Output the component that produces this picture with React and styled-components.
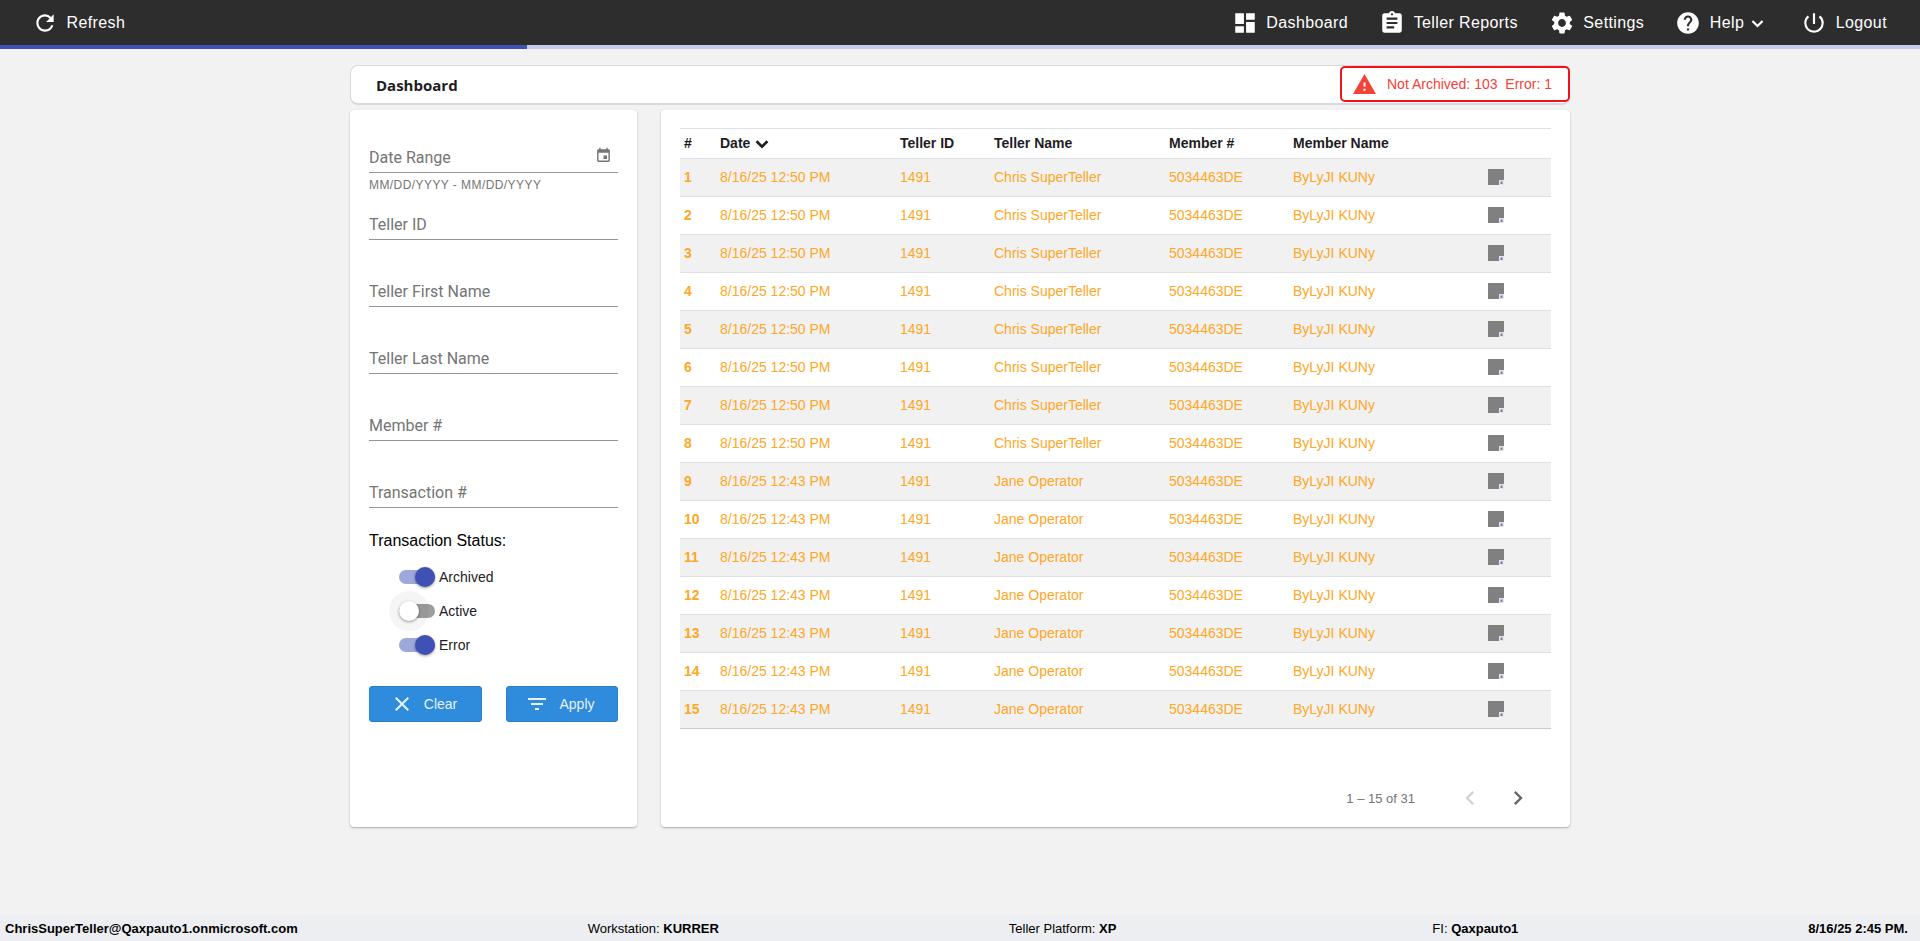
import React from "react";
import styled, { createGlobalStyle } from "styled-components";
import {
  MdRefresh, MdDashboard, MdAssignment, MdSettings, MdHelp, MdPowerSettingsNew,
  MdWarning, MdEvent, MdClose, MdFilterList, MdChevronLeft, MdChevronRight,
} from "react-icons/md";

const Global = createGlobalStyle`
  html, body { margin: 0; padding: 0; background: #f2f2f2; }
  * { box-sizing: border-box; }
  body { font-family: "Liberation Sans", Arial, sans-serif; }
`;

const Page = styled.div`
  height: 100vh;
  display: flex;
  flex-direction: column;
  overflow: hidden;
`;
const Nav = styled.header`
  height: 45px;
  flex: none;
  background: #2d2d2d;
  color: #fff;
  display: flex;
  align-items: center;
  justify-content: space-between;
  padding: 0 33px 0 32px;
`;
const NavGroup = styled.nav`
  display: flex;
  align-items: center;
  gap: 31px;
`;
const NavItem = styled.a`
  display: flex;
  align-items: center;
  gap: 8.5px;
  font-size: 16px;
  letter-spacing: 0.39px;
  color: #fff;
  white-space: nowrap;
  svg { font-size: 26px; flex: none; }
`;
const ChevronSvg = styled.svg`
  flex: none;
  fill: none;
  stroke: currentColor;
  stroke-width: 3;
`;
const NavChevron = styled(ChevronSvg)`
  width: 13px;
  height: 9px;
  margin: 2px 6px 0 -1.5px;
`;
const HeadChevron = styled(ChevronSvg)`
  width: 14px;
  height: 10px;
  margin: 2px 0 0 5px;
  stroke-width: 3.4;
`;
const ProgressTrack = styled.div`
  height: 4px;
  flex: none;
  background: #c5cae9;
`;
const ProgressFill = styled.div`
  height: 100%;
  background: #3f51b5;
`;
const Main = styled.main`
  flex: 1;
  width: 1220px;
  margin-left: 350px;
  padding-top: 16px;
  display: flex;
  flex-direction: column;
  gap: 5px;
`;
const TitleCard = styled.section`
  height: 40px;
  background: #fff;
  border: 1px solid #d9d9d9;
  border-bottom-width: 2px;
  border-radius: 8px;
  display: flex;
  align-items: flex-start;
  justify-content: space-between;
  padding-left: 25px;
`;
const Title = styled.h1`
  margin: 0;
  font: 700 15px/38px "Open Sans", sans-serif;
  color: #1d1d1f;
`;
const Alert = styled.div`
  width: 230px;
  height: 36px;
  margin-right: -1px;
  border: 2px solid #f4101c;
  border-radius: 5px;
  background: #fff;
  display: flex;
  align-items: center;
  gap: 10px;
  padding-left: 10px;
  color: #f44336;
  font-size: 14px;
  white-space: pre;
  svg { font-size: 25px; flex: none; }
`;
const Panels = styled.div`
  display: flex;
  gap: 24px;
`;
const Panel = styled.section`
  height: 717px;
  background: #fff;
  border-radius: 4px;
  box-shadow: 0 1px 2px rgba(0, 0, 0, 0.3);
`;
const FilterPanel = styled(Panel)`
  width: 287px;
  padding: 0 19px;
`;
const Field = styled.div`
  height: ${(p) => p.$h || 67}px;
  display: flex;
  flex-direction: column;
  justify-content: flex-end;
`;
const FieldRow = styled.div`
  height: 30px;
  border-bottom: 1px solid #949494;
  color: #757575;
  font-family: Roboto, sans-serif;
  font-size: 16px;
  display: flex;
  justify-content: space-between;
  align-items: center;
  padding-right: 6px;
  svg { font-size: 17px; margin-top: -4px; }
`;
const Hint = styled.div`
  height: 25px;
  line-height: 25px;
  font-size: 12px;
  letter-spacing: 0.43px;
  color: #757575;
`;
const StatusTitle = styled.div`
  margin-top: 23px;
  height: 20px;
  line-height: 20px;
  font-size: 16px;
  color: #000;
`;
const ToggleList = styled.div`
  margin: 9px 0 0 30px;
  display: flex;
  flex-direction: column;
`;
const ToggleRow = styled.label`
  height: 34px;
  display: flex;
  align-items: center;
  gap: 4px;
  font-size: 14px;
  color: #212121;
`;
const Track = styled.span`
  position: relative;
  width: 36px;
  height: 14px;
  border-radius: 7px;
  background: ${(p) => (p.$on ? "#9fa8da" : "#9e9e9e")};
`;
const Thumb = styled.span`
  position: absolute;
  top: -3px;
  left: ${(p) => (p.$on ? "16px" : "0")};
  width: 20px;
  height: 20px;
  border-radius: 50%;
  background: ${(p) => (p.$on ? "#3f51b5" : "#fff")};
  box-shadow: 0 1px 3px rgba(0, 0, 0, 0.4);
  ${(p) => (p.$focus ? "outline: 10px solid rgba(0,0,0,0.04);" : "")}
`;
const ButtonRow = styled.div`
  margin-top: 24px;
  display: flex;
  justify-content: space-between;
`;
const Button = styled.button`
  width: ${(p) => p.$w}px;
  height: 36px;
  border: 1px solid #2b80c9;
  border-radius: 3px;
  background: #2f8cdc;
  color: #e6f1fb;
  font: 14px "Liberation Sans", Arial, sans-serif;
  display: flex;
  align-items: center;
  justify-content: center;
  gap: 10px;
  padding: 0 4px 0 0;
  svg { font-size: 24px; }
`;
const TablePanel = styled(Panel)`
  width: 909px;
  padding: 18px 19px 0;
  display: flex;
  flex-direction: column;
`;
const columns = "36px 180px 94px 175px 124px 195px 1fr";
const HeadRow = styled.div`
  height: 31px;
  display: grid;
  grid-template-columns: ${columns};
  align-items: center;
  padding: 0 0 2px 4px;
  border-top: 1px solid #dfe0e6;
  border-bottom: 1px solid #dfe0e6;
  font-size: 14px;
  font-weight: 700;
  color: #1d1d1f;
`;
const DateHead = styled.span`
  display: flex;
  align-items: center;
`;
const Row = styled.div`
  height: 38px;
  display: grid;
  grid-template-columns: ${columns};
  align-items: center;
  padding: 0 0 2px 4px;
  border-bottom: 1px solid ${(p) => (p.$last ? "#c9cbd3" : "#dfe0e6")};
  background: ${(p) => (p.$odd ? "#f1f1f1" : "#fff")};
  font-size: 14px;
  color: #ffa726;
`;
const RowNum = styled.span`
  font-weight: 700;
`;
const Pager = styled.div`
  margin-top: 51px;
  height: 36px;
  display: flex;
  align-items: center;
  justify-content: flex-end;
  font-size: 13px;
  color: #757575;
  padding-right: 19px;
`;
const PagerText = styled.span`
  margin-right: 41px;
`;
const PagerBtn = styled.span`
  display: flex;
  font-size: 28px;
  color: ${(p) => (p.$off ? "#d3d3d3" : "#666")};
  margin-left: ${(p) => p.$gap || 0}px;
`;
const Footer = styled.footer`
  height: 26px;
  flex: none;
  background: #eceef1;
  display: flex;
  align-items: center;
  justify-content: space-between;
  padding: 0 12px 0 5px;
  font-size: 13px;
  color: #000;
  white-space: nowrap;
`;
const FooterItem = styled.span`
  margin-left: ${(p) => p.$shift || 0}px;
  b { font-weight: 700; }
`;

const NoteIcon = () => (
  <svg width="16" height="16" viewBox="0 0 16 16">
    <path d="M0 0H16V11H11V16H0Z" fill="#808080" />
    <rect x="11" y="11" width="5" height="5" fill="#dde6f2" />
    <rect x="12.5" y="12.5" width="2" height="2.5" fill="#808080" />
  </svg>
);

const chevronPath = <path d="M2 2.5L9 9.5L16 2.5" />;

const rows = Array.from({ length: 15 }, (_, i) => ({
  n: i + 1,
  date: i < 8 ? "8/16/25 12:50 PM" : "8/16/25 12:43 PM",
  name: i < 8 ? "Chris SuperTeller" : "Jane Operator",
}));
const fields = ["Teller ID", "Teller First Name", "Teller Last Name", "Member #", "Transaction #"];
const toggles = [
  { label: "Archived", on: true },
  { label: "Active", on: false, focus: true },
  { label: "Error", on: true },
];

export default function App() {
  return (
    <Page>
      <Global />
      <Nav>
        <NavItem><MdRefresh />Refresh</NavItem>
        <NavGroup>
          <NavItem><MdDashboard />Dashboard</NavItem>
          <NavItem><MdAssignment />Teller Reports</NavItem>
          <NavItem><MdSettings />Settings</NavItem>
          <NavItem><MdHelp />Help<NavChevron viewBox="0 0 18 12">{chevronPath}</NavChevron></NavItem>
          <NavItem><MdPowerSettingsNew />Logout</NavItem>
        </NavGroup>
      </Nav>
      <ProgressTrack><ProgressFill style={{ width: "27.44%" }} /></ProgressTrack>
      <Main>
        <TitleCard>
          <Title>Dashboard</Title>
          <Alert><MdWarning />{"Not Archived: 103  Error: 1"}</Alert>
        </TitleCard>
        <Panels>
          <FilterPanel>
            <Field $h={88}>
              <FieldRow>Date Range<MdEvent /></FieldRow>
              <Hint>MM/DD/YYYY - MM/DD/YYYY</Hint>
            </Field>
            {fields.map((f, i) => (
              <Field key={f} $h={i === 0 ? 42 : 67}>
                <FieldRow>{f}</FieldRow>
              </Field>
            ))}
            <StatusTitle>Transaction Status:</StatusTitle>
            <ToggleList>
              {toggles.map((t) => (
                <ToggleRow key={t.label}>
                  <Track $on={t.on}><Thumb $on={t.on} $focus={t.focus} /></Track>
                  {t.label}
                </ToggleRow>
              ))}
            </ToggleList>
            <ButtonRow>
              <Button $w={113}><MdClose />Clear</Button>
              <Button $w={112}><MdFilterList />Apply</Button>
            </ButtonRow>
          </FilterPanel>
          <TablePanel>
            <HeadRow>
              <span>#</span>
              <DateHead>Date<HeadChevron viewBox="0 0 18 12">{chevronPath}</HeadChevron></DateHead>
              <span>Teller ID</span>
              <span>Teller Name</span>
              <span>Member #</span>
              <span>Member Name</span>
              <span />
            </HeadRow>
            {rows.map((r) => (
              <Row key={r.n} $odd={r.n % 2 === 1} $last={r.n === 15}>
                <RowNum>{r.n}</RowNum>
                <span>{r.date}</span>
                <span>1491</span>
                <span>{r.name}</span>
                <span>5034463DE</span>
                <span>ByLyJI KUNy</span>
                <NoteIcon />
              </Row>
            ))}
            <Pager>
              <PagerText>1 – 15 of 31</PagerText>
              <PagerBtn $off><MdChevronLeft /></PagerBtn>
              <PagerBtn $gap={20}><MdChevronRight /></PagerBtn>
            </Pager>
          </TablePanel>
        </Panels>
      </Main>
      <Footer>
        <FooterItem><b>ChrisSuperTeller@Qaxpauto1.onmicrosoft.com</b></FooterItem>
        <FooterItem>Workstation: <b>KURRER</b></FooterItem>
        <FooterItem>Teller Platform: <b>XP</b></FooterItem>
        <FooterItem $shift={26}>FI: <b>Qaxpauto1</b></FooterItem>
        <FooterItem><b>8/16/25 2:45 PM.</b></FooterItem>
      </Footer>
    </Page>
  );
}
